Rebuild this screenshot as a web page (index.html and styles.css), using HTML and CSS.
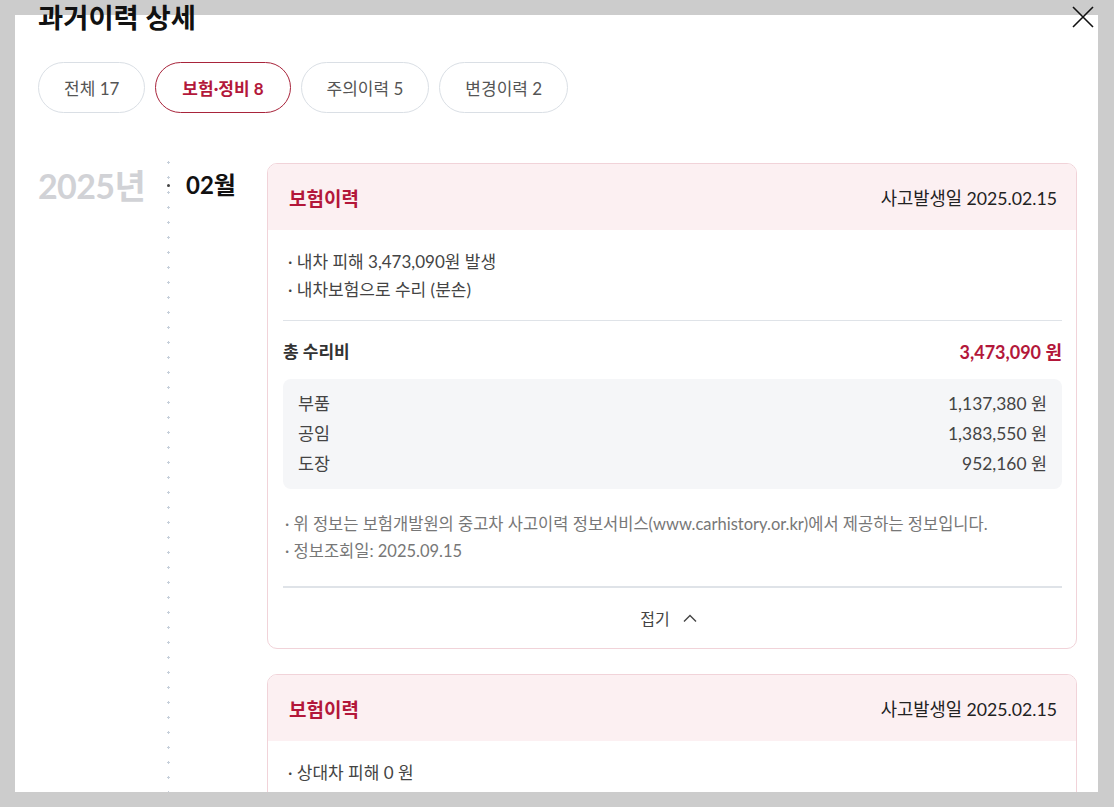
FILE: index.html
```html
<!DOCTYPE html>
<html lang="ko">
<head>
  <meta charset="UTF-8">
  <title>과거이력 상세</title>
  <link rel="stylesheet" href="styles.css">
</head>
<body>

  <div class="modal">
    <h2 class="modal-title">과거이력 상세</h2>
    <button class="close-btn" type="button" aria-label="닫기">
      <svg width="22" height="22" viewBox="0 0 22 22"><path d="M1 1 L21 21 M21 1 L1 21" stroke="#111" stroke-width="1.6" fill="none"/></svg>
    </button>

    <div class="tabs">
      <button class="tab">전체 17</button>
      <button class="tab active">보험·정비 8</button>
      <button class="tab">주의이력 5</button>
      <button class="tab">변경이력 2</button>
    </div>

    <div class="history">
      <div class="year">2025년</div>
      <div class="timeline">
        <div class="month-group">
          <div class="month">02월</div>
          <div class="cards">

            <div class="card">
              <div class="card-head">
                <span class="card-title">보험이력</span>
                <span class="card-date">사고발생일 2025.02.15</span>
              </div>
              <div class="card-body">
                <ul class="bullets">
                  <li>내차 피해 3,473,090원 발생</li>
                  <li>내차보험으로 수리 (분손)</li>
                </ul>
                <div class="total">
                  <span class="total-label">총 수리비</span>
                  <span class="total-value">3,473,090 원</span>
                </div>
                <div class="breakdown">
                  <div class="row"><span>부품</span><span>1,137,380 원</span></div>
                  <div class="row"><span>공임</span><span>1,383,550 원</span></div>
                  <div class="row"><span>도장</span><span>952,160 원</span></div>
                </div>
                <ul class="notes">
                  <li>위 정보는 보험개발원의 중고차 사고이력 정보서비스(www.carhistory.or.kr)에서 제공하는 정보입니다.</li>
                  <li>정보조회일: 2025.09.15</li>
                </ul>
                <button class="fold" type="button">접기
                  <svg width="14" height="8" viewBox="0 0 14 8"><polyline points="1,7.5 7,1.5 13,7.5" stroke="#444" stroke-width="1.4" fill="none"/></svg>
                </button>
              </div>
            </div>

            <div class="card">
              <div class="card-head">
                <span class="card-title">보험이력</span>
                <span class="card-date">사고발생일 2025.02.15</span>
              </div>
              <div class="card-body">
                <ul class="bullets">
                  <li>상대차 피해 0 원</li>
                  <li>내차보험으로 수리</li>
                </ul>
              </div>
            </div>

          </div>
        </div>
      </div>
    </div>
  </div>

</body>
</html>
```

FILE: styles.css
```css
body {
  margin: 0;
  background: #cccccc;
  font-family: Lato, "Noto Sans CJK KR", sans-serif;
  color: #222;
  overflow: hidden;
}

.modal {
  display: flow-root;
  position: relative;
  margin: 15px 16px 0 15px;
  height: 777px;
  padding: 0 21px 0 23px;
  background: #fff;
}

.modal-title {
  margin: -15px 0 0;
  height: 36px;
  line-height: 36px;
  font-size: 27.4px;
  font-weight: 700;
  color: #111;
}

.close-btn {
  position: absolute;
  top: -9px;
  right: 4px;
  padding: 0;
  border: 0;
  background: none;
  width: 22px;
  height: 22px;
}

.close-btn svg {
  display: block;
}

.tabs {
  display: flex;
  gap: 10px;
  margin-top: 26px;
}

.tab {
  height: 51px;
  padding: 0 25px;
  border: 1px solid #dadfe5;
  border-radius: 26px;
  background: #fff;
  font-family: inherit;
  font-size: 17px;
  color: #555;
}

.tab.active {
  padding: 0 26px;
  border-color: #a8243b;
  color: #b3173a;
  font-weight: 700;
}

.history {
  display: flex;
  margin-top: 42px;
}

.year {
  width: 129px;
  padding-top: 11px;
  font-size: 34px;
  font-weight: 700;
  line-height: 40px;
  color: #d1d2d6;
  letter-spacing: -0.6px;
}

.timeline {
  flex: 1;
  background: radial-gradient(circle, #c6cfda 1px, transparent 1.3px) 0 0 / 3px 15px repeat-y;
}

.month-group {
  display: flex;
  padding-left: 19px;
}

.month {
  position: relative;
  width: 81px;
  padding-top: 15px;
  font-size: 24px;
  font-weight: 700;
  line-height: 30px;
  color: #111;
}

.month::before {
  content: "";
  position: absolute;
  left: -19px;
  top: 29px;
  width: 3px;
  height: 3px;
  border-radius: 50%;
  background: #444;
}

.cards {
  width: 810px;
  padding-top: 8px;
}

.card {
  border: 1px solid #f1d3d9;
  border-radius: 10px;
  overflow: hidden;
  margin-bottom: 25px;
}

.card-head {
  display: flex;
  justify-content: space-between;
  align-items: center;
  height: 66px;
  padding: 0 19px 0 21px;
  background: #fcf0f2;
}

.card-title {
  font-size: 19px;
  font-weight: 700;
  color: #b3173a;
}

.card-date {
  font-size: 17.7px;
  color: #222;
}

.card-body {
  padding: 18px 14px 0 15px;
}

.bullets,
.notes {
  list-style: none;
  margin: 0;
  padding: 0;
}

.bullets li {
  font-size: 17px;
  line-height: 28px;
  color: #444;
  padding-left: 5px;
}

.bullets li::before,
.notes li::before {
  content: "· ";
}

.total {
  display: flex;
  justify-content: space-between;
  align-items: center;
  margin-top: 16px;
  padding-top: 16px;
  border-top: 1px solid #dfe3e8;
  line-height: 30px;
  font-weight: 700;
}

.total-label {
  font-size: 17px;
  color: #333;
}

.total-value {
  font-size: 18px;
  color: #b3173a;
}

.breakdown {
  margin-top: 12px;
  padding: 10px 15px;
  border-radius: 8px;
  background: #f5f6f8;
}

.row {
  display: flex;
  justify-content: space-between;
  font-size: 17.4px;
  line-height: 30px;
  color: #444;
}

.notes {
  margin-top: 22px;
  padding-bottom: 21px;
  border-bottom: 2px solid #dfe3e8;
}

.notes li {
  font-size: 16.5px;
  line-height: 27px;
  color: #777;
  padding-left: 2px;
}

.fold {
  display: flex;
  align-items: center;
  justify-content: center;
  gap: 13px;
  width: 100%;
  height: 60px;
  padding: 0 8px 0 0;
  border: 0;
  background: none;
  font-family: inherit;
  font-size: 16px;
  color: #444;
}
```
